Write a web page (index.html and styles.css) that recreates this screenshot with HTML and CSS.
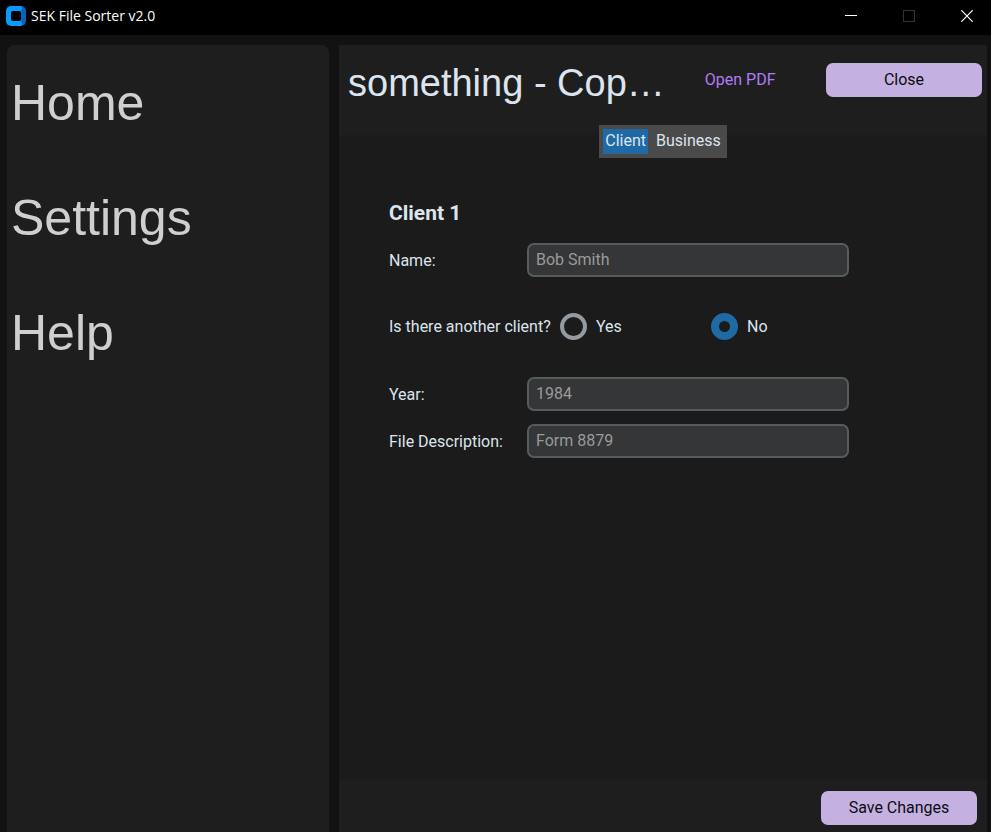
FILE: index.html
```html
<!DOCTYPE html>
<html lang="en">
<head>
<meta charset="utf-8">
<meta name="viewport" content="width=device-width, initial-scale=1">
<title>SEK File Sorter v2.0</title>
<link rel="stylesheet" href="styles.css">
</head>
<body>
<header class="titlebar">
  <svg class="app-icon" width="20" height="20" viewBox="0 0 20 20" aria-hidden="true">
    <path fill="#0a99ff" d="M5 0h11v20H5a5 5 0 0 1-5-5V5a5 5 0 0 1 5-5z"/>
    <path fill="#0566b8" d="M15 0a5 5 0 0 1 5 5v10a5 5 0 0 1-5 5l1-2-1-3V5l1-3z"/>
    <rect x="5" y="5" width="10" height="10" rx="2" fill="#000"/>
  </svg>
  <span class="app-name">SEK File Sorter v2.0</span>
  <div class="window-controls">
    <button class="window-button" type="button" aria-label="Minimize">
      <svg width="12" height="12" viewBox="0 0 12 12"><path d="M0 5.5h12" stroke="#fff"/></svg>
    </button>
    <button class="window-button" type="button" aria-label="Maximize" disabled>
      <svg width="12" height="12" viewBox="0 0 12 12"><rect x=".5" y=".5" width="11" height="11" fill="none" stroke="#333"/></svg>
    </button>
    <button class="window-button" type="button" aria-label="Close window">
      <svg width="12" height="12" viewBox="0 0 12 12"><path d="M.3.3l11.4 11.4M11.7.3L.3 11.7" stroke="#fff" stroke-width="1.2"/></svg>
    </button>
  </div>
</header>
<div class="workspace">
  <nav class="sidebar">
    <a class="nav-link" href="#home">Home</a>
    <a class="nav-link" href="#settings">Settings</a>
    <a class="nav-link" href="#help">Help</a>
  </nav>
  <main class="panel">
    <header class="panel-header">
      <h1 class="file-title">something - Cop…</h1>
      <a class="open-link" href="#pdf">Open PDF</a>
      <button class="action" type="button">Close</button>
    </header>
    <div class="tabs">
      <button class="tab tab-active" type="button">Client</button>
      <button class="tab" type="button">Business</button>
    </div>
    <form class="form" id="details">
      <h2 class="form-title">Client 1</h2>
      <div class="field">
        <label class="field-label" for="name">Name:</label>
        <input class="text-input" id="name" type="text" placeholder="Bob Smith">
      </div>
      <fieldset class="choices">
        <legend class="choices-legend">Is there another client?</legend>
        <label class="choice"><input class="radio" type="radio" name="another">Yes</label>
        <label class="choice"><input class="radio" type="radio" name="another" checked>No</label>
      </fieldset>
      <div class="field">
        <label class="field-label" for="year">Year:</label>
        <input class="text-input" id="year" type="text" placeholder="1984">
      </div>
      <div class="field">
        <label class="field-label" for="description">File Description:</label>
        <input class="text-input" id="description" type="text" placeholder="Form 8879">
      </div>
    </form>
    <footer class="panel-footer">
      <button class="action" type="submit" form="details">Save Changes</button>
    </footer>
  </main>
</div>
</body>
</html>
```
FILE: styles.css
```css
* {
  box-sizing: border-box;
}

body {
  margin: 0;
  min-height: 100vh;
  display: flex;
  flex-direction: column;
  background: #121212;
  color: #dce4ee;
  font: 16px/20px Roboto, sans-serif;
}

button,
input {
  font: inherit;
}

.titlebar {
  display: flex;
  align-items: center;
  height: 35px;
  padding: 0 0 3px 6px;
  gap: 5px;
  background: #000;
  color: #fff;
  font: 14px/20px "Open Sans", sans-serif;
}

.window-controls {
  display: flex;
  margin-left: auto;
}

.window-button {
  display: grid;
  place-items: center;
  width: 58px;
  height: 32px;
  padding: 0 0 0 9px;
  border: 0;
  background: none;
}

.workspace {
  flex: 1;
  display: grid;
  grid-template-columns: 322px 1fr;
  gap: 10px;
  padding: 10px 4px 0 7px;
}

.sidebar {
  display: flex;
  flex-direction: column;
  gap: 55px;
  padding: 28px 4px;
  border-radius: 8px 8px 0 0;
  background: #1e1e1e;
}

.nav-link {
  color: #d0cece;
  font: 50px/60px "Liberation Sans", sans-serif;
  text-decoration: none;
}

.panel {
  display: flex;
  flex-direction: column;
  min-width: 0;
  background: #1b1b1b;
}

.panel-header {
  display: flex;
  align-items: flex-start;
  height: 90px;
  padding: 18px 5px 0 9px;
  background: #1e1e1e;
}

.file-title {
  margin: 0;
  color: #dce4ee;
  font: 38px/40px "Liberation Sans", sans-serif;
  white-space: nowrap;
}

.open-link {
  margin: 7px auto 0 40px;
  color: #b07cf5;
  text-decoration: none;
}

.action {
  width: 156px;
  height: 34px;
  padding: 0;
  border: 0;
  border-radius: 7px;
  background: #c4b1e1;
  color: #0c0c10;
}

.tabs {
  display: flex;
  align-self: center;
  gap: 6px;
  margin-top: -10px;
  padding: 4px;
  background: #4a4a4a;
}

.tab {
  height: 25px;
  padding: 0 2px 2px;
  border: 0;
  background: none;
  color: #dce4ee;
}

.tab-active {
  background: #1f6aa5;
}

.form {
  flex: 1;
  padding: 45px 50px 0;
}

.form-title {
  margin: 0 0 20px;
  font: 700 21px/20px Roboto, sans-serif;
}

.field {
  display: grid;
  grid-template-columns: 138px minmax(0, 322px);
  align-items: center;
  margin-bottom: 13px;
}

.field-label {
  padding-top: 2px;
}

.text-input {
  width: 100%;
  height: 34px;
  padding: 0 7px 2px;
  border: 2px solid #565b5e;
  border-radius: 7px;
  background: #343638;
  color: #dce4ee;
}

.text-input::placeholder {
  color: #9a9a9a;
  opacity: 1;
}

.choices {
  display: flex;
  align-items: center;
  margin: 36px 0 37px;
  padding: 0;
  border: 0;
}

.choices-legend {
  float: left;
  padding: 0;
  width: 171px;
}

.choice {
  display: flex;
  align-items: center;
  gap: 9px;
  width: 151px;
}

.radio {
  appearance: none;
  width: 27px;
  height: 27px;
  margin: 0;
  border: 4px solid #949a9f;
  border-radius: 50%;
}

.radio:checked {
  border: 8px solid #1f6aa5;
}

.panel-footer {
  display: flex;
  justify-content: flex-end;
  padding: 11px 10px 7px;
  background: #1e1e1e;
}
```
